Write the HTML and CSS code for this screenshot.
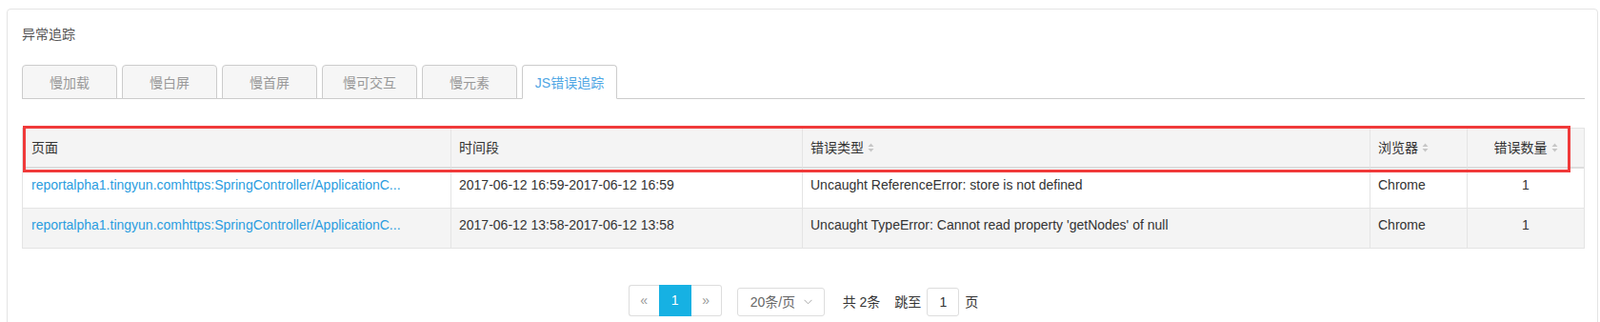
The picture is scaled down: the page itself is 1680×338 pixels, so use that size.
FILE: index.html
```html
<!DOCTYPE html>
<html>
<head>
    <meta charset="utf-8">
    <meta name="viewport" content="width=device-width, initial-scale=1.0">
    <link rel="stylesheet" href="styles.css">
</head>
<body>
    <div class="panel">
        <div class="panel-title">异常追踪</div>

        <div class="tabs">
            <div class="tab">慢加载</div>
            <div class="tab">慢白屏</div>
            <div class="tab">慢首屏</div>
            <div class="tab">慢可交互</div>
            <div class="tab">慢元素</div>
            <div class="tab active">JS错误追踪</div>
        </div>

        <div class="table-wrap">
            <table class="grid">
                <colgroup>
                    <col style="width: 449px">
                    <col style="width: 369px">
                    <col style="width: 596px">
                    <col style="width: 102px">
                    <col>
                </colgroup>
                <thead>
                    <tr>
                        <th>页面</th>
                        <th>时间段</th>
                        <th>错误类型<span class="sort"><svg width="7" height="12" viewBox="0 0 7 12"><path d="M0.5 5 L3.5 1.5 L6.5 5 Z M0.5 7 L3.5 10.5 L6.5 7 Z" fill="#c6c6c6"/></svg></span></th>
                        <th>浏览器<span class="sort"><svg width="7" height="12" viewBox="0 0 7 12"><path d="M0.5 5 L3.5 1.5 L6.5 5 Z M0.5 7 L3.5 10.5 L6.5 7 Z" fill="#c6c6c6"/></svg></span></th>
                        <th class="center">错误数量<span class="sort"><svg width="7" height="12" viewBox="0 0 7 12"><path d="M0.5 5 L3.5 1.5 L6.5 5 Z M0.5 7 L3.5 10.5 L6.5 7 Z" fill="#c6c6c6"/></svg></span></th>
                    </tr>
                </thead>
                <tbody>
                    <tr>
                        <td><a class="link" href="#">reportalpha1.tingyun.comhttps:SpringController/ApplicationC...</a></td>
                        <td>2017-06-12 16:59-2017-06-12 16:59</td>
                        <td>Uncaught ReferenceError: store is not defined</td>
                        <td>Chrome</td>
                        <td class="center">1</td>
                    </tr>
                    <tr>
                        <td><a class="link" href="#">reportalpha1.tingyun.comhttps:SpringController/ApplicationC...</a></td>
                        <td>2017-06-12 13:58-2017-06-12 13:58</td>
                        <td>Uncaught TypeError: Cannot read property 'getNodes' of null</td>
                        <td>Chrome</td>
                        <td class="center">1</td>
                    </tr>
                </tbody>
            </table>
            <div class="highlight"></div>
        </div>

        <div class="pagination">
            <div class="pager">
                <span class="page-btn prev">«</span>
                <span class="page-btn current">1</span>
                <span class="page-btn next">»</span>
            </div>
            <div class="page-size">
                <span>20条/页</span>
                <svg class="chevron" width="9" height="6" viewBox="0 0 9 6"><path d="M0.5 0.8 L4.5 4.8 L8.5 0.8" fill="none" stroke="#a8a8a8" stroke-width="1"/></svg>
            </div>
            <span class="total">共 2条</span>
            <span class="jump">跳至</span>
            <span class="jump-input">1</span>
            <span class="jump-unit">页</span>
        </div>
    </div>
</body>
</html>
```

FILE: styles.css
```css
* {
    box-sizing: border-box;
}

body {
    margin: 0;
    background: #fff;
    font-family: "Liberation Sans", "Noto Sans CJK SC", sans-serif;
    font-size: 14px;
    color: #333;
    overflow: hidden;
}

.panel {
    margin: 9px 2px 0 7px;
    border: 1px solid #e4e4e4;
    border-radius: 4px;
    padding: 16px 13px 24px 15px;
}

.panel-title {
    line-height: 20px;
    color: #555;
}

/* tabs */
.tabs {
    display: flex;
    gap: 5px;
    margin-top: 22px;
    border-bottom: 1px solid #ccc;
}

.tab {
    width: 100px;
    height: 36px;
    margin-bottom: -1px;
    padding-top: 2px;
    line-height: 32px;
    text-align: center;
    color: #999;
    background: #f6f6f6;
    border: 1px solid #ccc;
    border-radius: 4px 4px 0 0;
}

.tab.active {
    background: #fff;
    color: #4fa6e4;
    border-bottom-color: #fff;
}

/* table */
.table-wrap {
    position: relative;
    margin-top: 30px;
}

.grid {
    width: 100%;
    table-layout: fixed;
    border-collapse: separate;
    border-spacing: 0;
    border: 1px solid #e4e4e4;
}

.grid th {
    padding: 10px 8px;
    line-height: 20px;
    font-weight: normal;
    text-align: left;
    background: #f4f4f4;
    border-bottom: 2px solid #ddd;
    white-space: nowrap;
}

.grid td {
    padding: 7px 8px 14px;
    line-height: 20px;
    white-space: nowrap;
    overflow: hidden;
}

.grid th + th,
.grid td + td {
    border-left: 1px solid #e4e4e4;
}

.grid th:first-child,
.grid td:first-child {
    padding-left: 9px;
}

.grid tbody tr + tr td {
    border-top: 1px solid #e4e4e4;
}

.grid tbody tr:nth-child(2) td {
    background: #f4f4f4;
}

.grid .center {
    text-align: center;
}

.sort {
    display: inline-block;
    margin-left: 4px;
    vertical-align: -1px;
}

.sort svg {
    display: block;
}

.link {
    color: #2a9de0;
    text-decoration: none;
}

.highlight {
    position: absolute;
    left: 1px;
    top: -2px;
    width: 1625px;
    height: 49px;
    border: 3px solid #f03a3a;
    pointer-events: none;
}

/* pagination */
.pagination {
    display: flex;
    justify-content: center;
    align-items: flex-end;
    margin-top: 38px;
    line-height: 30px;
}

.pager {
    display: flex;
}

.page-btn {
    height: 33px;
    line-height: 31px;
    text-align: center;
    color: #999;
    border: 1px solid #ddd;
}

.page-btn.prev {
    width: 32px;
    border-right: 0;
    border-radius: 3px 0 0 3px;
}

.page-btn.current {
    width: 34px;
    color: #fff;
    background: #16b1e3;
    border-color: #16b1e3;
}

.page-btn.next {
    width: 32px;
    border-left: 0;
    border-radius: 0 3px 3px 0;
}

.page-size {
    display: flex;
    align-items: center;
    width: 92px;
    height: 30px;
    margin-left: 16px;
    padding-left: 13px;
    color: #666;
    border: 1px solid #ddd;
    border-radius: 3px;
}

.chevron {
    margin-left: 9px;
}

.total {
    margin-left: 19px;
}

.jump {
    margin-left: 15px;
}

.jump-input {
    width: 34px;
    height: 30px;
    margin-left: 6px;
    line-height: 28px;
    text-align: center;
    border: 1px solid #ddd;
    border-radius: 3px;
}

.jump-unit {
    margin-left: 6px;
}
```
